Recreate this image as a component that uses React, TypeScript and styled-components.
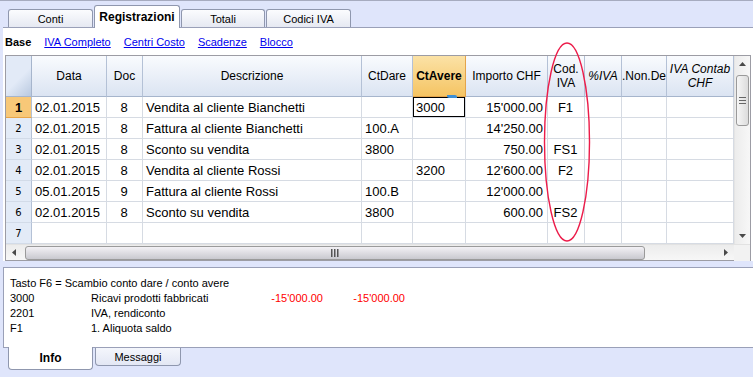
import React from 'react';
import styled, { createGlobalStyle, css } from 'styled-components';

const GlobalStyle = createGlobalStyle`
  html, body {
    margin: 0;
    padding: 0;
    background: #dfe5fb;
  }
`;

const Page = styled.div`
  position: relative;
  width: 753px;
  height: 377px;
  overflow: hidden;
  display: flex;
  flex-direction: column;
  background: #dfe5fb;
  font-family: 'Liberation Sans', Arial, sans-serif;
  color: #000;
`;

const TopBar = styled.div`
  height: 27px;
  border-top: 1px solid #a6abbf;
  display: flex;
  align-items: flex-end;
  gap: 1px;
  padding-left: 8px;
  box-sizing: border-box;
`;

const Tab = styled.div<{ $active?: boolean; $w: number }>`
  width: ${(p) => p.$w}px;
  height: 18px;
  box-sizing: border-box;
  display: flex;
  align-items: center;
  justify-content: center;
  border: 1px solid #8f97ae;
  border-bottom: none;
  border-radius: 3px 3px 0 0;
  background: linear-gradient(#fbfcfe, #e6e9f2);
  font-size: 11px;
  ${(p) =>
    p.$active &&
    css`
      height: 23px;
      margin-bottom: -1px;
      background: #fff;
      font-size: 12px;
      font-weight: bold;
      z-index: 1;
    `}
`;

const MainPanel = styled.div`
  margin-left: 3px;
  background: #fff;
  border-top: 1px solid #9aa0b8;
  display: flex;
  flex-direction: column;
`;

const Toolbar = styled.div`
  height: 27px;
  display: flex;
  align-items: center;
  gap: 13px;
  padding-left: 2px;
  font-size: 11px;
`;

const ViewName = styled.span`
  font-weight: bold;
`;

const ViewLink = styled.a`
  color: #0000ee;
  text-decoration: underline;
  cursor: pointer;
`;

const GridBox = styled.div`
  margin-left: 2px;
  width: 746px;
  box-sizing: border-box;
  border: 1px solid #9c9ca4;
  display: flex;
  flex-direction: column;
`;

const GridBody = styled.div`
  display: flex;
`;

const Table = styled.div`
  width: 728px;
  display: flex;
  flex-direction: column;
`;

const Row = styled.div`
  display: flex;
`;

const HeadCell = styled.div<{ $w: number; $active?: boolean; $italic?: boolean }>`
  width: ${(p) => p.$w}px;
  height: 41px;
  box-sizing: border-box;
  display: flex;
  align-items: center;
  justify-content: center;
  text-align: center;
  white-space: pre-line;
  overflow: hidden;
  font-size: 12px;
  line-height: 14px;
  font-style: ${(p) => (p.$italic ? 'italic' : 'normal')};
  background: linear-gradient(#f9fbfe, #dbe4f2);
  border-right: 1px solid #b4c1d6;
  border-bottom: 1px solid #a6b5cc;
  ${(p) =>
    p.$active &&
    css`
      font-weight: bold;
      background: linear-gradient(#fbe2a6, #f5c463);
      border-right-color: #e3a44b;
      border-bottom-color: #e3a44b;
    `}
`;

const Corner = styled.div`
  width: 26px;
  height: 41px;
  box-sizing: border-box;
  background: linear-gradient(135deg, #e2eaf7 55%, #b9c9e0);
  border-right: 1px solid #a6b5cc;
  border-bottom: 1px solid #a6b5cc;
`;

const RowNum = styled.div<{ $active?: boolean }>`
  width: 26px;
  height: 21px;
  box-sizing: border-box;
  display: flex;
  align-items: center;
  justify-content: center;
  font-family: 'DejaVu Sans', sans-serif;
  font-size: 10px;
  background: #e3ebf7;
  border-right: 1px solid #b4c1d6;
  border-bottom: 1px solid #d2dbe8;
  ${(p) =>
    p.$active &&
    css`
      background: #f8c878;
      border-bottom-color: #e8a54a;
      font-family: 'Liberation Sans', Arial, sans-serif;
      font-weight: bold;
      font-size: 13px;
    `}
`;

const Cell = styled.div<{ $w: number; $align: string; $selected?: boolean }>`
  position: relative;
  width: ${(p) => p.$w}px;
  height: 21px;
  box-sizing: border-box;
  padding: 0 4px 0 3px;
  font-size: 13px;
  line-height: 21px;
  white-space: nowrap;
  overflow: visible;
  text-align: ${(p) => p.$align};
  border-right: 1px solid #d6dbe3;
  border-bottom: 1px solid #d6dbe3;
  ${(p) =>
    p.$selected &&
    css`
      box-shadow: inset 0 0 0 1px #000;
    `}
`;

const FillHandle = styled.span`
  position: absolute;
  top: -2px;
  right: 8px;
  width: 10px;
  height: 3px;
  background: #3d8fd6;
  border-radius: 0 2px 0 2px;
`;

const VScroll = styled.div`
  width: 16px;
  display: flex;
  flex-direction: column;
  align-items: center;
  background: linear-gradient(90deg, #ececec, #f7f7f7);
  border-left: 1px solid #e4e4e4;
  box-sizing: border-box;
`;

const ArrowBtn = styled.div`
  width: 16px;
  height: 16px;
  display: flex;
  align-items: center;
  justify-content: center;
  flex: none;
`;

const VTrack = styled.div`
  flex: 1;
  width: 100%;
  display: flex;
  flex-direction: column;
  align-items: center;
  padding-top: 3px;
`;

const VThumb = styled.div`
  width: 13px;
  height: 51px;
  box-sizing: border-box;
  border: 1px solid #9a9a9a;
  border-radius: 3px;
  background: linear-gradient(90deg, #f6f6f6, #dcdcdc);
  display: flex;
  align-items: center;
  justify-content: center;
`;

const HScroll = styled.div`
  height: 16px;
  display: flex;
  align-items: center;
  background: linear-gradient(#ececec, #f7f7f7);
  border-top: 1px solid #e2e2e2;
  box-sizing: border-box;
`;

const HThumb = styled.div`
  width: 620px;
  height: 14px;
  margin-left: 3px;
  box-sizing: border-box;
  border: 1px solid #9a9a9a;
  border-radius: 3px;
  background: linear-gradient(#f3f1f5, #c9c9cf);
  display: flex;
  align-items: center;
  justify-content: center;
`;

const HTrack = styled.div`
  flex: 1;
`;

const ScrollCorner = styled.div`
  width: 16px;
  height: 16px;
  background: #f2f2f2;
`;

const Spacer = styled.div`
  height: 6px;
`;

const InfoPanel = styled.div`
  margin-left: 3px;
  height: 81px;
  box-sizing: border-box;
  background: #fff;
  border-top: 1px solid #9aa0b8;
  border-left: 1px solid #9aa0b8;
  border-bottom: 1px solid #9aa0b8;
  padding: 8px 0 0 6px;
  font-size: 11px;
  line-height: 15px;
`;

const InfoGrid = styled.div`
  display: grid;
  grid-template-columns: 81px 170px 62px 82px;
`;

const Amount = styled.span`
  color: #ff0000;
  text-align: right;
`;

const BottomTabs = styled.div`
  display: flex;
  align-items: flex-start;
  gap: 2px;
  padding-left: 8px;
`;

const BottomTab = styled.div<{ $active?: boolean; $w: number }>`
  width: ${(p) => p.$w}px;
  height: 18px;
  box-sizing: border-box;
  display: flex;
  align-items: center;
  justify-content: center;
  border: 1px solid #8f97ae;
  border-top: none;
  border-radius: 0 0 4px 4px;
  background: linear-gradient(#f4f6fc, #e3e7f4);
  font-size: 11px;
  ${(p) =>
    p.$active &&
    css`
      height: 23px;
      margin-top: -1px;
      background: #fff;
      font-size: 12px;
      font-weight: bold;
    `}
`;

const Ellipse = styled.svg`
  position: absolute;
  left: 540px;
  top: 40px;
  pointer-events: none;
`;

const columns = [
  { key: 'data', title: 'Data', w: 75, align: 'left' },
  { key: 'doc', title: 'Doc', w: 36, align: 'center' },
  { key: 'desc', title: 'Descrizione', w: 219, align: 'left' },
  { key: 'dare', title: 'CtDare', w: 51, align: 'left' },
  { key: 'avere', title: 'CtAvere', w: 53, align: 'left', active: true },
  { key: 'imp', title: 'Importo CHF', w: 82, align: 'right' },
  { key: 'cod', title: 'Cod.\nIVA', w: 37, align: 'center' },
  { key: 'piva', title: '%IVA', w: 37, align: 'right', italic: true },
  { key: 'nonded', title: '.Non.De', w: 45, align: 'right' },
  { key: 'contab', title: 'IVA Contab\nCHF', w: 67, align: 'right', italic: true },
];

type Entry = Record<string, string>;

const rows: Entry[] = [
  { data: '02.01.2015', doc: '8', desc: 'Vendita al cliente Bianchetti', dare: '', avere: '3000', imp: "15'000.00", cod: 'F1' },
  { data: '02.01.2015', doc: '8', desc: 'Fattura al cliente Bianchetti', dare: '100.A', avere: '', imp: "14'250.00", cod: '' },
  { data: '02.01.2015', doc: '8', desc: 'Sconto su vendita', dare: '3800', avere: '', imp: '750.00', cod: 'FS1' },
  { data: '02.01.2015', doc: '8', desc: 'Vendita al cliente Rossi', dare: '', avere: '3200', imp: "12'600.00", cod: 'F2' },
  { data: '05.01.2015', doc: '9', desc: 'Fattura al cliente Rossi', dare: '100.B', avere: '', imp: "12'000.00", cod: '' },
  { data: '02.01.2015', doc: '8', desc: 'Sconto su vendita', dare: '3800', avere: '', imp: '600.00', cod: 'FS2' },
  {},
];

const Arrow = ({ dir }: { dir: 'up' | 'down' | 'left' | 'right' }) => {
  const pts = {
    up: '0,4 3.5,0 7,4',
    down: '0,0 7,0 3.5,4',
    left: '4,0 4,7 0,3.5',
    right: '0,0 0,7 4,3.5',
  }[dir];
  const vertical = dir === 'up' || dir === 'down';
  return (
    <svg width={vertical ? 7 : 4} height={vertical ? 4 : 7}>
      <polygon points={pts} fill="#4a4a4a" />
    </svg>
  );
};

const Grip = ({ vertical }: { vertical?: boolean }) => (
  <svg width={vertical ? 7 : 8} height={vertical ? 8 : 8}>
    {[0, 3, 6].map((o) =>
      vertical ? (
        <rect key={o} x={0} y={o} width={7} height={1} fill="#666" />
      ) : (
        <rect key={o} x={o} y={0} width={1.5} height={8} fill="#555" />
      )
    )}
  </svg>
);

const App = () => {
  return (
    <Page>
      <GlobalStyle />
      <TopBar>
        <Tab $w={85}>Conti</Tab>
        <Tab $w={86} $active>
          Registrazioni
        </Tab>
        <Tab $w={84}>Totali</Tab>
        <Tab $w={85}>Codici IVA</Tab>
      </TopBar>

      <MainPanel>
        <Toolbar>
          <ViewName>Base</ViewName>
          <ViewLink>IVA Completo</ViewLink>
          <ViewLink>Centri Costo</ViewLink>
          <ViewLink>Scadenze</ViewLink>
          <ViewLink>Blocco</ViewLink>
        </Toolbar>

        <GridBox>
          <GridBody>
            <Table>
              <Row>
                <Corner />
                {columns.map((c) => (
                  <HeadCell key={c.key} $w={c.w} $active={c.active} $italic={c.italic}>
                    {c.title}
                  </HeadCell>
                ))}
              </Row>
              {rows.map((r, i) => (
                <Row key={i}>
                  <RowNum $active={i === 0}>{i + 1}</RowNum>
                  {columns.map((c) => {
                    const selected = i === 0 && c.key === 'avere';
                    return (
                      <Cell key={c.key} $w={c.w} $align={c.align} $selected={selected}>
                        {r[c.key] || ''}
                        {selected && <FillHandle />}
                      </Cell>
                    );
                  })}
                </Row>
              ))}
            </Table>
            <VScroll>
              <ArrowBtn>
                <Arrow dir="up" />
              </ArrowBtn>
              <VTrack>
                <VThumb>
                  <Grip vertical />
                </VThumb>
              </VTrack>
              <ArrowBtn>
                <Arrow dir="down" />
              </ArrowBtn>
            </VScroll>
          </GridBody>
          <HScroll>
            <ArrowBtn>
              <Arrow dir="left" />
            </ArrowBtn>
            <HThumb>
              <Grip />
            </HThumb>
            <HTrack />
            <ArrowBtn>
              <Arrow dir="right" />
            </ArrowBtn>
            <ScrollCorner />
          </HScroll>
        </GridBox>
      </MainPanel>

      <Spacer />

      <InfoPanel>
        <div>Tasto F6 = Scambio conto dare / conto avere</div>
        <InfoGrid>
          <span>3000</span>
          <span>Ricavi prodotti fabbricati</span>
          <Amount>-15'000.00</Amount>
          <Amount>-15'000.00</Amount>
          <span>2201</span>
          <span>IVA, rendiconto</span>
          <span />
          <span />
          <span>F1</span>
          <span>1. Aliquota saldo</span>
          <span />
          <span />
        </InfoGrid>
      </InfoPanel>

      <BottomTabs>
        <BottomTab $w={85} $active>
          Info
        </BottomTab>
        <BottomTab $w={86}>Messaggi</BottomTab>
      </BottomTabs>

      <Ellipse width={56} height={206} viewBox="0 0 56 206">
        <ellipse cx={27} cy={102} rx={22.5} ry={99} fill="none" stroke="#ec1c4a" strokeWidth={1.4} />
      </Ellipse>
    </Page>
  );
};

export default App;
